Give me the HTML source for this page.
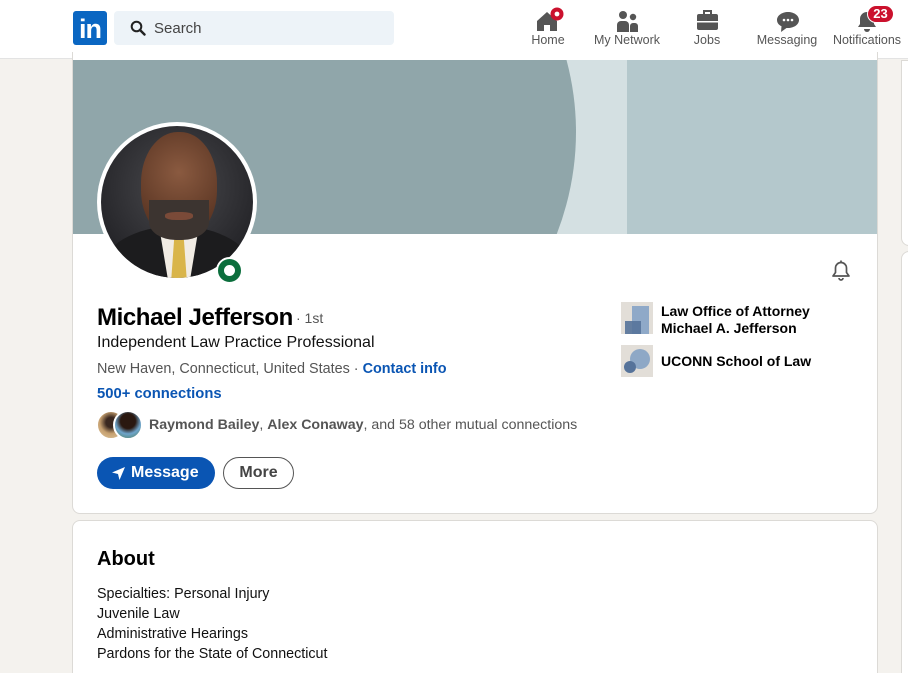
<!DOCTYPE html>
<html><head><meta charset="utf-8"><style>
*{margin:0;padding:0;box-sizing:border-box}
html,body{width:908px;height:673px;overflow:hidden}
body{background:#f4f2ee;font-family:"Liberation Sans",sans-serif;position:relative;color:#000}
.abs{position:absolute}
.nav{left:0;top:0;width:908px;height:59px;background:#fff;border-bottom:1px solid #e3e3e3}
.navitem{position:absolute;top:33px;font-size:12.5px;color:#555;text-align:center;transform:translateX(-50%);white-space:nowrap}
.card{background:#fff;border:1px solid #dcdad6;border-radius:8px;overflow:hidden}
.t{position:absolute;white-space:nowrap}
</style></head><body>
<div class="abs nav">
  <div class="abs" style="left:73px;top:11px;width:34px;height:34px;background:#0a66c2;border-radius:3px;color:#fff;font-weight:bold;font-size:27px;line-height:36px;text-align:center;letter-spacing:-1px">in</div>
  <div class="abs" style="left:114px;top:11px;width:280px;height:34px;background:#edf3f8;border-radius:4px"></div>
  <svg class="abs" style="left:130px;top:20px" width="16" height="16" viewBox="0 0 16 16"><circle cx="6.5" cy="6.5" r="4.8" fill="none" stroke="#222" stroke-width="2"/><path d="M10 10l4.5 4.5" stroke="#222" stroke-width="2.4" stroke-linecap="round"/></svg>
  <div class="t" style="left:154px;top:20px;font-size:15px;color:#444">Search</div>
  <svg class="abs" style="left:535px;top:7px" width="30" height="25" viewBox="0 0 30 25"><path d="M2 14L12 5l10 9v10h-7v-6h-6v6H2z" fill="#555"/><circle cx="22" cy="7" r="6.5" fill="#cb112d"/><circle cx="22" cy="7" r="2.4" fill="#fff"/></svg>
  <div class="navitem" style="left:548px;top:33px">Home</div>
  <svg class="abs" style="left:616px;top:10px" width="24" height="22" viewBox="0 0 24 22"><circle cx="7" cy="5" r="4" fill="#555"/><circle cx="17" cy="7" r="3.2" fill="#555"/><path d="M1 22v-7a4 4 0 014-4h4a4 4 0 014 4v7z" fill="#555"/><path d="M14 22v-6a3 3 0 013-3h2a3 3 0 013 3v6z" fill="#555"/></svg>
  <div class="navitem" style="left:627px">My Network</div>
  <svg class="abs" style="left:696px;top:9px" width="23" height="22" viewBox="0 0 23 22"><path d="M8 5V2h7v3" fill="none" stroke="#555" stroke-width="2"/><rect x="1" y="5" width="21" height="16" rx="2" fill="#555"/><rect x="1" y="12" width="21" height="1.5" fill="#fff"/></svg>
  <div class="navitem" style="left:707px">Jobs</div>
  <svg class="abs" style="left:776px;top:11px" width="24" height="22" viewBox="0 0 24 22"><path d="M12 1C6 1 1 4.5 1 9c0 2.8 1.8 5 4.5 6.3L5 21l5.5-4H12c6 0 11-3.5 11-8S18 1 12 1z" fill="#555"/><circle cx="8" cy="9" r="1.3" fill="#fff"/><circle cx="12" cy="9" r="1.3" fill="#fff"/><circle cx="16" cy="9" r="1.3" fill="#fff"/></svg>
  <div class="navitem" style="left:787px">Messaging</div>
  <svg class="abs" style="left:855px;top:10px" width="24" height="22" viewBox="0 0 24 22"><path d="M3 17h18l-2-3V9a7 7 0 00-14 0v5z" fill="#555"/><path d="M9 19a3 3 0 006 0z" fill="#555"/></svg>
  <div class="abs" style="left:867px;top:5px;width:27px;height:18px;background:#cb112d;border-radius:9px;color:#fff;font-size:13px;font-weight:bold;text-align:center;line-height:16px;border:1px solid #fff">23</div>
  <div class="navitem" style="left:867px">Notifications</div>
</div>

<div class="abs" style="left:901px;top:60px;width:20px;height:186px;background:#fff;border:1px solid #dcdad6;border-radius:0 0 0 8px"></div>
<div class="abs" style="left:901px;top:251px;width:20px;height:430px;background:#fff;border:1px solid #dcdad6;border-radius:8px 0 0 0"></div>

<div class="abs card" style="left:72px;top:52px;width:806px;height:462px;border-top:none;border-radius:0 0 8px 8px">
  <div class="abs" style="left:0;top:8px;width:806px;height:174px;background:#b4c8cc;overflow:hidden">
    <div class="abs" style="left:0;top:0;width:554px;height:174px;background:#d4e0e2"></div>
    <div class="abs" style="left:-500px;top:-300px;width:1003px;height:744px;border-radius:50%;background:#90a6aa"></div>
  </div>
</div>
<div class="abs" style="left:97px;top:122px;width:160px;height:160px;border-radius:50%;background:#fff;padding:4px">
  <div style="width:152px;height:152px;border-radius:50%;overflow:hidden;position:relative;background:radial-gradient(circle at 50% 40%,#4a4a4e,#26262a 70%)">
    <div class="abs" style="left:0px;top:100px;width:152px;height:90px;border-radius:50% 50% 0 0;background:#1c1c1e"></div>
    <div class="abs" style="left:58px;top:100px;width:40px;height:60px;background:#f1ece4;clip-path:polygon(0 0,100% 0,75% 100%,25% 100%)"></div>
    <div class="abs" style="left:70px;top:112px;width:16px;height:45px;background:#d9b54a;clip-path:polygon(20% 0,80% 0,100% 100%,0 100%)"></div>
    <div class="abs" style="left:40px;top:6px;width:76px;height:106px;border-radius:48% 48% 45% 45%;background:radial-gradient(circle at 50% 38%,#8a5a40,#5a3523 75%)"></div>
    <div class="abs" style="left:48px;top:74px;width:60px;height:40px;border-radius:0 0 45% 45%;background:#3c3430"></div>
    <div class="abs" style="left:64px;top:86px;width:28px;height:8px;border-radius:40%;background:#7a4a38"></div>
  </div>
</div>
<div class="abs" style="left:216px;top:257px;width:27px;height:27px;border-radius:50%;background:#fff;padding:2px"><div style="width:23px;height:23px;border-radius:50%;border:6px solid #0b6e3c;background:#fff"></div></div>

<svg class="abs" style="left:829px;top:258px" width="24" height="24" viewBox="0 0 24 24"><path d="M4 18h16l-2.5-3.5V10a5.5 5.5 0 00-11 0v4.5z" fill="none" stroke="#555" stroke-width="1.7" stroke-linejoin="round"/><path d="M10 20a2 2 0 004 0" fill="none" stroke="#555" stroke-width="1.7"/><path d="M12 2.5v2" stroke="#555" stroke-width="1.7"/></svg>

<div class="t" style="left:97px;top:304px;font-size:24px;font-weight:600;letter-spacing:-0.4px">Michael Jefferson</div>
<div class="t" style="left:296px;top:310px;font-size:14px;color:#555">· 1st</div>
<div class="t" style="left:97px;top:334px;font-size:16px;color:#111">Independent Law Practice Professional</div>
<div class="t" style="left:97px;top:361px;font-size:14.4px;color:#555">New Haven, Connecticut, United States · <span style="color:#0a55b3;font-weight:bold">Contact info</span></div>
<div class="t" style="left:97px;top:386px;font-size:14.8px;color:#0a55b3;font-weight:bold">500+ connections</div>
<div class="abs" style="left:97px;top:411px;width:28px;height:28px;border-radius:50%;background:radial-gradient(circle at 50% 40%,#3a2820 25%,#c6a070 55%,#e0c9a0);border:1px solid #fff"></div>
<div class="abs" style="left:113px;top:410px;width:30px;height:30px;border-radius:50%;background:radial-gradient(circle at 50% 35%,#2a1810 35%,#6fa5cc 60%,#4a7a50);border:2px solid #fff"></div>
<div class="t" style="left:149px;top:417px;font-size:14.2px;color:#555"><b>Raymond Bailey</b>, <b>Alex Conaway</b>, and 58 other mutual connections</div>
<div class="abs" style="left:97px;top:457px;width:118px;height:32px;border-radius:16px;background:#0a55b3;color:#fff;font-size:16px;font-weight:bold;line-height:32px;padding-left:34px">Message</div>
<svg class="abs" style="left:111px;top:466px" width="15" height="15" viewBox="0 0 15 15"><path d="M1 6.5L14 1 8.5 14 7 8z" fill="#fff"/></svg>
<div class="abs" style="left:223px;top:457px;width:71px;height:32px;border-radius:16px;border:1px solid #555;color:#444;font-size:16px;font-weight:bold;line-height:30px;text-align:center">More</div>

<div class="abs" style="left:621px;top:302px;width:32px;height:32px;background:#e2ded8;overflow:hidden">
  <div class="abs" style="left:11px;top:4px;width:17px;height:28px;background:#8fa9c8"></div>
  <div class="abs" style="left:4px;top:19px;width:16px;height:13px;background:#56739a;opacity:.9"></div>
</div>
<div class="t" style="left:661px;top:303px;font-size:14px;font-weight:600;line-height:17px">Law Office of Attorney<br>Michael A. Jefferson</div>
<div class="abs" style="left:621px;top:345px;width:32px;height:32px;background:#e2ded8;overflow:hidden">
  <div class="abs" style="left:9px;top:4px;width:20px;height:20px;border-radius:50%;background:#8ea8c6"></div>
  <div class="abs" style="left:3px;top:16px;width:12px;height:12px;border-radius:50%;background:#56739a"></div>
</div>
<div class="t" style="left:661px;top:353px;font-size:14px;font-weight:600">UCONN School of Law</div>

<div class="abs card" style="left:72px;top:520px;width:806px;height:170px">
  <div class="t" style="left:24px;top:27px;font-size:20px;font-weight:600">About</div>
  <div class="t" style="left:24px;top:63px;font-size:14.3px;line-height:20px;color:#111">Specialties: Personal Injury<br>Juvenile Law<br>Administrative Hearings<br>Pardons for the State of Connecticut</div>
</div>
</body></html>
